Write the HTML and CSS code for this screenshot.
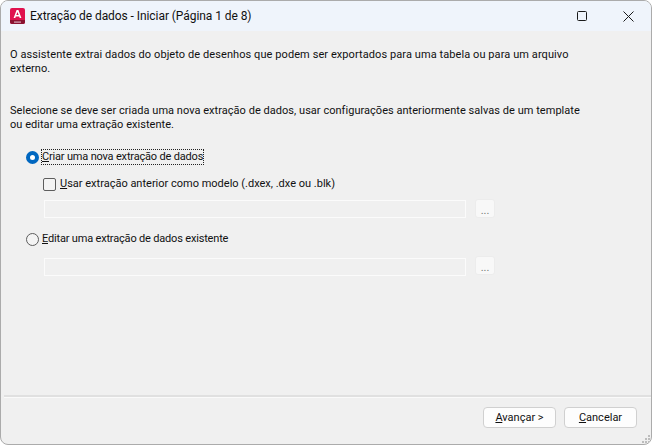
FILE: index.html
```html
<!DOCTYPE html>
<html lang="pt">
<head>
<meta charset="utf-8">
<title>Extração de dados</title>
<link rel="stylesheet" href="styles.css">
</head>
<body>
<div class="window">
  <header class="titlebar">
    <svg class="app-icon" width="15" height="16" viewBox="0 0 15 16">
      <rect width="15" height="16" rx="2" fill="#e0114e"/>
      <path d="M0 12 H15 V14 a2 2 0 0 1 -2 2 H2 a2 2 0 0 1 -2 -2 Z" fill="#8a1230"/>
      <path d="M3.6 10 L6.6 2 H8.4 L11.4 10 H9.7 L9.2 8.5 H5.8 L5.3 10 Z M6.3 7.1 H8.7 L7.5 3.9 Z" fill="#fff"/>
      <rect x="4" y="13.5" width="7" height="1.2" fill="#d8a8b8"/>
    </svg>
    <span class="title">Extração de dados - Iniciar (Página 1 de 8)</span>
    <div class="controls">
      <button class="ctl" aria-label="Maximizar"><svg width="10" height="10" viewBox="0 0 10 10"><rect x=".5" y=".5" width="9" height="9" rx="1" fill="none" stroke="#1a1a1a"/></svg></button>
      <button class="ctl" aria-label="Fechar"><svg width="11" height="11" viewBox="0 0 11 11"><path d="M.5.5l10 10M10.5.5l-10 10" stroke="#1a1a1a" fill="none"/></svg></button>
    </div>
  </header>
  <main class="content">
    <p class="para para-first">O assistente extrai dados do objeto de desenhos que podem ser exportados para uma tabela ou para um arquivo<br>externo.</p>
    <p class="para para-second">Selecione se deve ser criada uma nova extração de dados, usar configurações anteriormente salvas de um template<br>ou editar uma extração existente.</p>
    <div class="options">
      <div class="row">
        <span class="radio radio-on"></span>
        <span class="label tight focus"><u>C</u>riar uma nova extração de dados</span>
      </div>
      <div class="row row-check">
        <span class="check"></span>
        <span class="label"><u>U</u>sar extração anterior como modelo (.dxex, .dxe ou .blk)</span>
      </div>
      <div class="file-row">
        <span class="field"></span>
        <span class="browse">...</span>
      </div>
      <div class="row row-edit">
        <span class="radio"></span>
        <span class="label tight"><u>E</u>ditar uma extração de dados existente</span>
      </div>
      <div class="file-row">
        <span class="field"></span>
        <span class="browse">...</span>
      </div>
    </div>
  </main>
  <footer class="footer">
    <div class="rule"></div>
    <div class="buttons">
      <button class="btn"><u>A</u>vançar &gt;</button>
      <button class="btn"><u>C</u>ancelar</button>
    </div>
    <svg class="grip" width="10" height="10" viewBox="0 0 10 10" fill="#bdbdbd">
      <rect x="7" y="1" width="2" height="2"/><rect x="4" y="4" width="2" height="2"/><rect x="7" y="4" width="2" height="2"/>
      <rect x="1" y="7" width="2" height="2"/><rect x="4" y="7" width="2" height="2"/><rect x="7" y="7" width="2" height="2"/>
    </svg>
  </footer>
</div>
</body>
</html>
```
FILE: styles.css
```css
* { box-sizing: border-box; }
html, body { margin: 0; height: 100%; background: #fff; }
body { font: 11px/14px Roboto, "Noto Sans", sans-serif; color: #111; }
.window {
  width: 652px; height: 445px;
  display: flex; flex-direction: column;
  background: #f0f0f0;
  border: 1px solid #ababab;
  border-radius: 8px;
  overflow: hidden;
}
.titlebar {
  height: 30px; flex: none;
  display: flex; align-items: center;
  padding-left: 9px;
  background: #eff4fb;
}
.app-icon { margin-right: 5px; }
.title { font-size: 12px; letter-spacing: -.07px; }
.controls { margin-left: auto; display: flex; }
.ctl {
  width: 46px; height: 30px; padding: 0;
  border: 0; background: transparent;
  display: flex; align-items: center; justify-content: center;
}
.content { flex: 1; padding: 17px 9px 0; }
.para { margin: 0; width: 632px; }
.para-first { letter-spacing: .08px; }
.para-second { margin-top: 28px; letter-spacing: .035px; }
.options { margin-top: 18px; padding-left: 16px; }
.row { display: flex; align-items: center; height: 14px; }
.radio {
  width: 13px; height: 13px; border-radius: 50%;
  border: 1px solid #5d5d5d; background: #f4f4f4;
  margin-right: 3px; flex: none;
}
.radio-on { border: 4px solid #0067c0; background: #fff; }
.label { white-space: nowrap; }
.tight { letter-spacing: -.18px; }
.focus { outline: 1px dotted #222; }
.row-check { margin-top: 13px; padding-left: 17px; }
.check {
  width: 13px; height: 13px; flex: none;
  border: 1px solid #5d5d5d; border-radius: 2px;
  background: #f4f4f4; margin-right: 4px;
}
.file-row { display: flex; margin-top: 8px; padding-left: 18px; }
.field {
  width: 422px; height: 18px; margin-top: 1px;
  background: #f0f0f0; border: 1px solid #fbfbfb;
}
.browse {
  width: 20px; height: 19px; margin-left: 9px;
  background: #f8f8f8; border: 1px solid #ececec; border-radius: 3px;
  font-size: 11px; line-height: 21px; text-align: center; color: #777;
}
.row-edit { margin-top: 14px; }
.row-edit + .file-row { margin-top: 10px; }
.row-edit + .file-row .field { margin-top: 2px; }
.footer { flex: none; position: relative; padding: 0 0 0 3px; height: 49px; }
.rule { height: 3px; background: #e0e0e0; border-bottom: 1px solid #fafafa; }
.buttons { display: flex; justify-content: flex-end; gap: 8px; padding: 9px 14px 0 0; }
.btn {
  width: 73px; height: 21px; padding: 0;
  font: inherit; color: #111; line-height: 18px;
  background: #fdfdfd; border: 1px solid #d0d0d0; border-radius: 4px;
}
.grip { position: absolute; right: 0; bottom: 0; }
```
